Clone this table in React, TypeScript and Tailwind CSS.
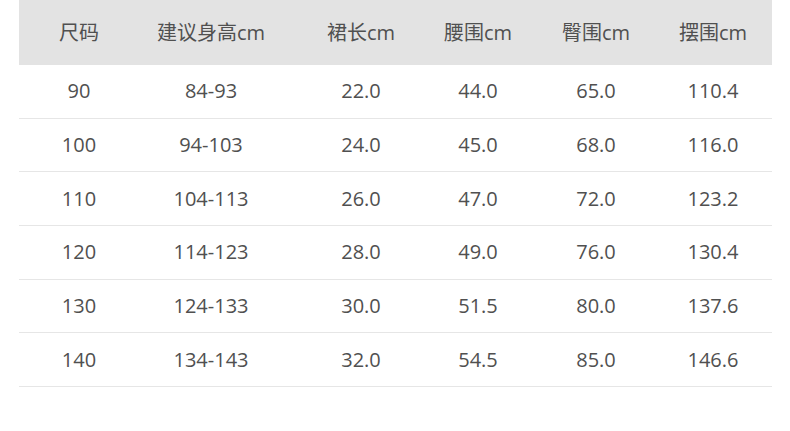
import React from 'react'

const headers = ['尺码', '建议身高cm', '裙长cm', '腰围cm', '臀围cm', '摆围cm']

const rows = [
    ['90', '84-93', '22.0', '44.0', '65.0', '110.4'],
    ['100', '94-103', '24.0', '45.0', '68.0', '116.0'],
    ['110', '104-113', '26.0', '47.0', '72.0', '123.2'],
    ['120', '114-123', '28.0', '49.0', '76.0', '130.4'],
    ['130', '124-133', '30.0', '51.5', '80.0', '137.6'],
    ['140', '134-143', '32.0', '54.5', '85.0', '146.6'],
]

const grid = 'grid grid-cols-[120px_144px_156px_78px_158px_97px] items-center'

export default function App() {
    return (
        <div className="w-[790px] h-[431px] bg-white pl-[19px] pr-[18px] text-[20px] text-[#505050] font-['Open_Sans','Noto_Sans_CJK_SC',sans-serif]">
            <div className={`${grid} h-[65px] bg-[#e3e3e3]`}>
                {headers.map((h, i) => (
                    <div key={h} className={i === 5 ? 'text-center pr-[21px]' : 'text-center'}>{h}</div>
                ))}
            </div>
            {rows.map(row => (
                <div key={row[0]} className={`${grid} h-[53.67px] border-b border-[#e6e6e6]`}>
                    {row.map((cell, i) => (
                        <div key={i} className={i === 5 ? 'text-center pr-[21px]' : 'text-center'}>{cell}</div>
                    ))}
                </div>
            ))}
        </div>
    )
}
